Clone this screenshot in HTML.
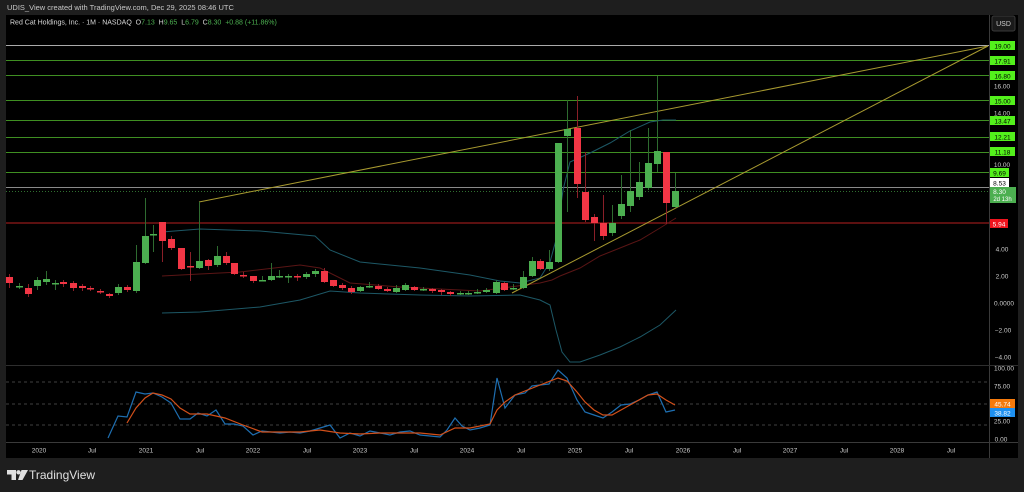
<!DOCTYPE html>
<html><head><meta charset="utf-8">
<style>
html,body{margin:0;padding:0;background:#1e1e1e;width:1024px;height:492px;overflow:hidden;font-family:"Liberation Sans",sans-serif}
svg{position:absolute;left:0;top:0}
text{font-family:"Liberation Sans",sans-serif}
</style></head><body>
<svg id="s" width="1024" height="492" viewBox="0 0 1024 492">
<rect x="0" y="0" width="1024" height="492" fill="#1e1e1e"/>
<rect x="6" y="15" width="1012" height="443" fill="#000"/>
<text x="7" y="10" font-size="7.5" fill="#c8c8c8">UDIS_View created with TradingView.com, Dec 29, 2025 08:46 UTC</text>
<text x="10" y="24.5" font-size="7" fill="#d8d8d8" xml:space="preserve">Red Cat Holdings, Inc. · 1M · NASDAQ  O<tspan fill="#4caf50">7.13</tspan>  H<tspan fill="#4caf50">9.65</tspan>  L<tspan fill="#4caf50">6.79</tspan>  C<tspan fill="#4caf50">8.30</tspan>  <tspan fill="#4caf50">+0.88 (+11.86%)</tspan></text>
<line x1="989.5" y1="15" x2="989.5" y2="458" stroke="#3a3a3a"/>
<line x1="6" y1="365.5" x2="1018" y2="365.5" stroke="#2e2e2e"/>
<line x1="6" y1="442.5" x2="1018" y2="442.5" stroke="#3a3a3a"/>
<rect x="992" y="16" width="23" height="15" rx="2" fill="#1a1a1a" stroke="#3a3a3a"/>
<text x="1003.5" y="26" font-size="7" fill="#ccc" text-anchor="middle">USD</text>
<g stroke="#555" stroke-dasharray="3,3" stroke-width="0.8">
<line x1="6" y1="382" x2="989" y2="382"/><line x1="6" y1="404" x2="989" y2="404"/><line x1="6" y1="425" x2="989" y2="425"/>
</g>
<g stroke="#3f8f22" stroke-width="1">
<line x1="6" y1="45.5" x2="989" y2="45.5" stroke="#aaa"/>
<line x1="6" y1="60.5" x2="989" y2="60.5"/><line x1="6" y1="75.5" x2="989" y2="75.5"/>
<line x1="6" y1="100.5" x2="989" y2="100.5"/><line x1="6" y1="120.5" x2="989" y2="120.5"/>
<line x1="6" y1="137.5" x2="989" y2="137.5"/><line x1="6" y1="152.5" x2="989" y2="152.5"/>
<line x1="6" y1="172.5" x2="989" y2="172.5"/>
</g>
<line x1="6" y1="187.5" x2="989" y2="187.5" stroke="#8a8a8a"/>
<line x1="6" y1="191.5" x2="989" y2="191.5" stroke="#2f6f2f" stroke-dasharray="1,2"/>
<line x1="6" y1="223" x2="989" y2="223" stroke="#7a1515" stroke-width="1.5"/>
<polyline fill="none" stroke="#1d5866" stroke-width="1" points="162,232 200,229 260,231 315,236 330,250 360,262 420,268 470,275 500,281 520,283 540,278 550,262 556,240 563,190 570,162 590,153 610,143 630,131 650,122 663,120 676,120"/>
<polyline fill="none" stroke="#1d5866" stroke-width="1" points="162,313 200,312 260,307 300,300 330,291 360,293 420,295 470,296 520,295 540,300 550,305 556,330 562,352 570,362 580,362 600,355 620,347 640,337 660,325 676,310"/>
<polyline fill="none" stroke="#5a1515" stroke-width="1" points="162,276 200,274 240,272 300,265 320,268 350,283 400,287 480,291 510,287 540,283 552,280 560,276 580,268 600,256 620,248 640,240 660,228 676,218"/>
<line x1="199" y1="202" x2="988" y2="46" stroke="#a89a30" stroke-width="1"/>
<line x1="512" y1="293" x2="988" y2="46" stroke="#a89a30" stroke-width="1"/>
<g id="c"></g>
<polyline fill="none" stroke="#1e6eb0" stroke-width="1.2" points="108,438 118,416 127,417 136,392 145,394 153,393 162,397 171,403 180,419 190,419 198,413 207,416 216,410 225,424 234,424 243,426 253,435 262,431 271,432 280,433 290,432 300,433 310,431 320,428 330,425 340,438 350,433 360,436 370,431 380,433 390,435 400,432 410,431 420,435 430,436 440,437 447,430 455,418 462,426 470,430 480,428 490,425 497,378 505,408 515,395 525,393 532,386 540,385 549,384 558,370 567,378 577,400 585,412 594,415 603,418 612,412 621,405 630,404 639,400 648,395 657,392 666,412 675,410"/>
<polyline fill="none" stroke="#d2501a" stroke-width="1.2" points="127,423 136,408 145,398 153,393 162,395 171,399 180,408 190,414 207,414 225,418 243,425 262,432 280,432 300,432 320,430 340,433 360,434 380,433 400,433 420,433 440,435 455,428 470,428 490,424 497,410 505,402 515,395 530,389 540,385 558,378 567,381 577,392 585,402 594,410 603,415 612,415 621,410 630,405 648,395 657,394 666,400 675,405"/>
<g font-size="6.5" text-anchor="middle">
<g fill="#53f01c"><rect x="990" y="41" width="25" height="9"/><rect x="990" y="56" width="25" height="9"/><rect x="990" y="71" width="25" height="9"/><rect x="990" y="96" width="25" height="9"/><rect x="990" y="116" width="25" height="9"/><rect x="990" y="132" width="25" height="9"/><rect x="990" y="147" width="25" height="9"/><rect x="990" y="168" width="19" height="9"/></g>
<g fill="#000"><text x="1002.5" y="48.3">19.00</text><text x="1002.5" y="63.3">17.91</text><text x="1002.5" y="78.3">16.80</text><text x="1002.5" y="103.3">15.00</text><text x="1002.5" y="123.3">13.47</text><text x="1002.5" y="139.3">12.21</text><text x="1002.5" y="154.3">11.18</text><text x="999.5" y="175.3">9.69</text></g>
<g fill="#ccc"><text x="1002" y="88.5">16.00</text><text x="1002" y="115.5">14.00</text><text x="1002" y="167">10.00</text><text x="1002" y="251.5">4.00</text><text x="1002" y="278.5">2.00</text><text x="1004" y="305.5">0.0000</text><text x="1003" y="332.5">−2.00</text><text x="1003" y="359.5">−4.00</text>
<text x="1004" y="370.5">100.00</text><text x="1002" y="388.5">75.00</text><text x="1002" y="423.5">25.00</text><text x="1001" y="441.5">0.00</text></g>
<rect x="990" y="178" width="19" height="9" fill="#fff"/><text x="999.5" y="185.3" fill="#000">8.53</text>
<rect x="990" y="187" width="26" height="16" fill="#4caf50"/><text x="999.5" y="194" fill="#fff">8.30</text><text x="1002.5" y="201" fill="#fff" font-size="6">2d 13h</text>
<rect x="990" y="219" width="18" height="9" fill="#f0141e"/><text x="999" y="226.3" fill="#fff">5.94</text>
<rect x="990" y="399" width="25" height="9" fill="#f57a0c"/><text x="1002.5" y="406.3" fill="#fff">45.74</text>
<rect x="990" y="408" width="25" height="9" fill="#1e90f0"/><text x="1002.5" y="415.3" fill="#fff">38.82</text>
</g>
<g font-size="6.5" fill="#ccc" text-anchor="middle">
<text x="39" y="452.5">2020</text><text x="92" y="452.5">Jul</text><text x="146" y="452.5">2021</text><text x="200" y="452.5">Jul</text><text x="253" y="452.5">2022</text><text x="307" y="452.5">Jul</text><text x="360" y="452.5">2023</text><text x="414" y="452.5">Jul</text><text x="467" y="452.5">2024</text><text x="521" y="452.5">Jul</text><text x="575" y="452.5">2025</text><text x="629" y="452.5">Jul</text><text x="683" y="452.5">2026</text><text x="737" y="452.5">Jul</text><text x="790" y="452.5">2027</text><text x="844" y="452.5">Jul</text><text x="897" y="452.5">2028</text><text x="951" y="452.5">Jul</text>
</g>
<g fill="#e0e0e0">
<path d="M7 470h9v10h-4.5v-5.5h-4.5z"/><circle cx="18.5" cy="472.3" r="2.2"/><path d="M21.5 470h6.5l-5.5 10h-4.5z"/>
</g>
<text x="29" y="479" font-size="12" fill="#e0e0e0">TradingView</text>
</svg>
<script>
var d=[[9,277,283,274,288],[19,286,286,283,289],[28,288,294,284,297],[37,286,280,277,290],[46,282,279,271,285],[55,283,283,280,290],[63,282,284,280,287],[73,283,288,281,291],[82,286,288,284,291],[90,288,289,286,291],[100,291,292,289,294],[109,294,296,293,298],[118,293,287,284,295],[127,287,290,285,292],[136,291,262,245,293],[145,263,236,198,264],[153,235,234,225,252],[162,222,241,222,262],[171,239,248,236,250],[181,248,269,248,270],[190,266,267,252,281],[199,268,261,202,269],[208,260,266,259,270],[217,265,256,246,267],[226,256,263,252,265],[234,263,274,263,275],[243,275,276,272,278],[253,276,281,276,283],[262,280,280,276,281],[271,280,276,263,281],[279,277,276,270,278],[288,276,276,274,283],[297,276,277,274,281],[306,277,274,272,279],[315,274,271,269,277],[324,271,282,268,283],[333,280,286,280,287],[342,285,288,283,290],[351,288,292,286,294],[360,291,287,286,292],[369,287,286,282,288],[378,286,289,284,290],[387,289,291,287,292],[396,292,288,285,293],[405,290,285,283,291],[414,287,290,286,291],[423,289,289,287,291],[432,289,291,288,293],[441,290,292,289,295],[450,292,294,291,296],[460,294,293,291,295],[468,293,293,291,295],[477,293,292,289,294],[486,292,290,288,293],[496,293,282,280,294],[504,283,290,282,291],[513,289,288,284,290],[523,288,277,271,289],[532,276,261,257,277],[540,261,269,259,270],[549,269,262,250,271],[558,262,143,143,263],[567,136,129,100,212],[577,128,184,96,198],[585,192,220,152,222],[594,217,223,214,241],[603,223,236,195,240],[612,233,223,205,236],[621,216,204,175,219],[630,206,191,130,212],[639,197,182,162,200],[648,188,163,128,190],[657,164,151,76,172],[666,152,203,152,224],[675,207,191,173,208]];
var g=document.getElementById('c'),h='';
d.forEach(function(c){var x=c[0],o=c[1],cl=c[2],up=cl<=o,col=up?'#4caf50':'#f23645',wc=up?'#2e6b30':'#8a1f28';
h+='<line x1="'+(x+.5)+'" y1="'+c[3]+'" x2="'+(x+.5)+'" y2="'+c[4]+'" stroke="'+wc+'"/>';
var t=Math.min(o,cl),b=Math.max(Math.abs(o-cl),1.5);h+='<rect x="'+(x-3)+'" y="'+t+'" width="7" height="'+b+'" fill="'+col+'"/>';});
g.innerHTML=h;
</script>
</body></html>
